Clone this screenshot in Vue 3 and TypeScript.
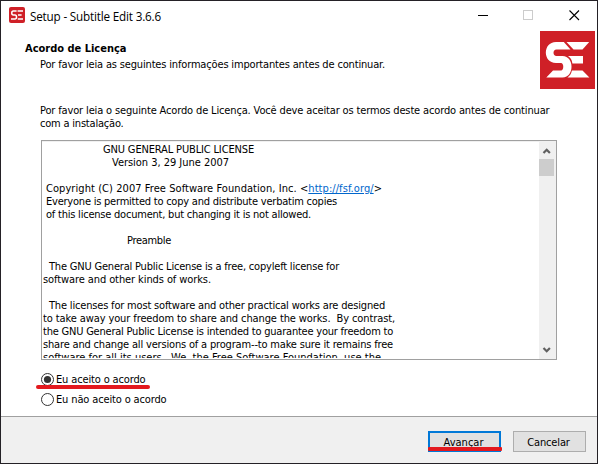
<script setup lang="ts">
interface Line {
  text: string
  indent: number
  width: number
  link?: string
  tail?: string
}

const lines: Line[] = [
  { text: 'GNU GENERAL PUBLIC LICENSE', indent: 61, width: 151 },
  { text: 'Version 3, 29 June 2007', indent: 70, width: 117 },
  { text: '', indent: 0, width: 0 },
  { text: 'Copyright (C) 2007 Free Software Foundation, Inc. <', indent: 4, width: 336, link: 'http://fsf.org/', tail: '>' },
  { text: 'Everyone is permitted to copy and distribute verbatim copies', indent: 4, width: 291 },
  { text: 'of this license document, but changing it is not allowed.', indent: 4, width: 265 },
  { text: '', indent: 0, width: 0 },
  { text: 'Preamble', indent: 85, width: 44 },
  { text: '', indent: 0, width: 0 },
  { text: 'The GNU General Public License is a free, copyleft license for', indent: 7, width: 290 },
  { text: 'software and other kinds of works.', indent: 1, width: 168 },
  { text: '', indent: 0, width: 0 },
  { text: 'The licenses for most software and other practical works are designed', indent: 7, width: 336 },
  { text: 'to take away your freedom to share and change the works.\u00a0 By contrast,', indent: 1, width: 352 },
  { text: 'the GNU General Public License is intended to guarantee your freedom to', indent: 1, width: 350 },
  { text: 'share and change all versions of a program--to make sure it remains free', indent: 1, width: 350 },
  { text: 'software for all its users.\u00a0 We, the Free Software Foundation, use the', indent: 1, width: 338 },
]

// Spreads the difference between natural and wanted width over the letters.
const vFit = {
  mounted(el: HTMLElement, binding: { value: number }) {
    const count = (el.textContent ?? '').length
    if (!count || !binding.value) return
    const natural = el.getBoundingClientRect().width
    el.style.letterSpacing = `${(binding.value - natural) / count}px`
  },
}
</script>

<template>
  <div class="window">
    <header class="titlebar">
      <svg class="app-icon" viewBox="0 0 16 16">
        <rect width="16" height="16" rx="2" fill="#cf2027" />
        <g fill="none" stroke="#fff" stroke-width="1.5">
          <path d="M7.6 4H4.4C2.2 4 2.2 8 4.4 8H6C8 8 8 12 6 12H2" />
          <path d="M8.6 4H14M9 8H12.6M8.8 12H14" />
        </g>
      </svg>
      <span class="title"><span v-fit="131" class="fit">Setup - Subtitle Edit 3.6.6</span></span>
      <svg class="controls" viewBox="0 0 120 14">
        <path d="M6 6.5H16" stroke="#000" />
        <rect x="51.5" y="1.5" width="9" height="9" fill="none" stroke="#ccc" />
        <path d="M97.5 1.5L107 11M107 1.5L97.5 11" stroke="#000" stroke-width="1.1" />
      </svg>
    </header>

    <section class="heading">
      <div class="heading-text">
        <h1><span v-fit="101.5" class="fit">Acordo de Licença</span></h1>
        <p><span v-fit="345" class="fit">Por favor leia as seguintes informações importantes antes de continuar.</span></p>
      </div>
      <svg class="logo" viewBox="0 0 55 58">
        <rect width="55" height="58" fill="#cf2027" />
        <g fill="#fff">
          <path d="M23.8 11H16C2.5 11 2.5 32 16 32H21C24 32 24 39.5 21 39.5H13L6.3 46.5H22.5C34.5 46.5 34.5 25 22.5 25H16.5C12.5 25 12.5 18.5 16.5 18.5H30.5Z" />
          <path d="M26.5 11H49.2L42.5 18.5H33.5Z" />
          <path d="M28 25H43V32.5H32.4C32 29 30.6 26.8 28 25Z" />
          <path d="M31.9 39.5H42.5L49.4 46.5H27.4C30 44.8 31.4 42.5 31.9 39.5Z" />
        </g>
      </svg>
    </section>

    <main class="body">
      <p><span v-fit="509.5" class="fit">Por favor leia o seguinte Acordo de Licença. Você deve aceitar os termos deste acordo antes de continuar</span></p>
      <p><span v-fit="83.5" class="fit">com a instalação.</span></p>

      <div class="license">
        <div class="license-text">
          <div v-for="(line, i) in lines" :key="i" class="line" :style="{ paddingLeft: line.indent + 'px' }">
            <span v-fit="line.width" class="fit">{{ line.text }}<a v-if="line.link">{{ line.link }}</a>{{ line.tail }}</span>
          </div>
        </div>
        <div class="scrollbar">
          <svg viewBox="0 0 17 17"><path d="M4.5 11L7.7 7.8L10.9 11" /></svg>
          <div class="thumb"></div>
          <svg viewBox="0 0 17 17"><path d="M4.5 6L7.7 9.2L10.9 6" /></svg>
        </div>
      </div>

      <div class="options">
        <label class="option marked">
          <svg class="radio" viewBox="0 0 13 13">
            <circle cx="6.5" cy="6.5" r="6" />
            <circle class="dot" cx="6.5" cy="6.5" r="3.6" />
          </svg>
          <span v-fit="89.5" class="fit">Eu aceito o acordo</span>
        </label>
        <label class="option">
          <svg class="radio" viewBox="0 0 13 13"><circle cx="6.5" cy="6.5" r="6" /></svg>
          <span v-fit="110.5" class="fit">Eu não aceito o acordo</span>
        </label>
      </div>
    </main>

    <footer class="footer">
      <button class="btn primary"><span v-fit="40" class="fit">Avançar</span></button>
      <button class="btn"><span v-fit="42.5" class="fit">Cancelar</span></button>
    </footer>
  </div>
</template>

<style>
body {
  margin: 0;
}
</style>

<style scoped>
.window {
  box-sizing: border-box;
  width: 598px;
  height: 464px;
  display: flex;
  flex-direction: column;
  border: 1px solid #242126;
  background: #fff;
  color: #000;
  font: 11px/13px 'DejaVu Sans Condensed', 'DejaVu Sans', sans-serif;
  overflow: hidden;
}
.fit {
  display: inline-block;
  white-space: pre;
}
h1,
p {
  margin: 0;
  font-size: 11px;
  line-height: 13px;
  white-space: nowrap;
}
.titlebar {
  flex: none;
  height: 30px;
  display: flex;
  align-items: flex-start;
  padding-left: 8px;
}
.app-icon {
  width: 16px;
  height: 16px;
  margin-top: 6px;
}
.title {
  flex: 1;
  margin: 7px 0 0 5px;
  font: 11.7px/16px 'Open Sans', 'Noto Sans', sans-serif;
}
.controls {
  width: 120px;
  height: 14px;
  margin: 8px 5px 0 0;
}
.heading {
  flex: none;
  height: 58px;
  display: flex;
  justify-content: space-between;
  padding: 0 2px 0 24px;
}
.heading-text {
  padding-top: 11px;
}
.heading-text p {
  margin: 3px 0 0 15px;
}
.logo {
  width: 55px;
  height: 58px;
}
.body {
  flex: none;
  height: 312px;
  padding: 15px 40px 0 39px;
}
.license {
  box-sizing: border-box;
  width: 516px;
  height: 220px;
  margin: 10px 0 0 1px;
  display: flex;
  border: 1px solid #a0a0a0;
}
.license-text {
  flex: 1;
  height: 215px;
  padding-top: 1px;
  border-top: 1px solid #f0f0f0;
  overflow: hidden;
}
.line {
  height: 13px;
}
.line a {
  color: #0066cc;
  text-decoration: underline;
}
.scrollbar {
  width: 17px;
  display: flex;
  flex-direction: column;
  background: #f0f0f0;
}
.scrollbar svg {
  width: 17px;
  height: 17px;
  margin-top: 1px;
}
.scrollbar path {
  fill: none;
  stroke: #606060;
  stroke-width: 2.2;
}
.thumb {
  width: 15px;
  height: 17px;
  margin-bottom: auto;
  background: #cdcdcd;
}
.options {
  display: flex;
  flex-direction: column;
  gap: 7px;
  padding: 13px 0 0 1px;
}
.option {
  position: relative;
  height: 13px;
  display: flex;
  align-items: center;
  gap: 2px;
}
.radio {
  width: 13px;
  height: 13px;
  overflow: visible;
}
.radio circle {
  fill: #fff;
  stroke: #333;
}
.radio .dot {
  fill: #333;
  stroke: none;
}
.marked::after {
  content: '';
  position: absolute;
  left: -5px;
  top: 12px;
  width: 114px;
  height: 4px;
  border-radius: 2px;
  background: #e3191e;
}
.footer {
  flex: 1;
  display: flex;
  justify-content: flex-end;
  gap: 12px;
  padding: 14px 11px 0 0;
  border-top: 1px solid #a0a0a0;
  background: #f0f0f0;
}
.btn {
  position: relative;
  box-sizing: border-box;
  width: 73px;
  height: 21px;
  padding: 2px 2px 0 0;
  border: 1px solid #adadad;
  background: #e1e1e1;
  color: #000;
  font: inherit;
}
.primary {
  border: 2px solid #0078d7;
}
.primary::after {
  content: '';
  position: absolute;
  left: -2px;
  bottom: -1px;
  width: 74px;
  height: 4px;
  border-radius: 1px;
  background: #e3191e;
}
</style>
